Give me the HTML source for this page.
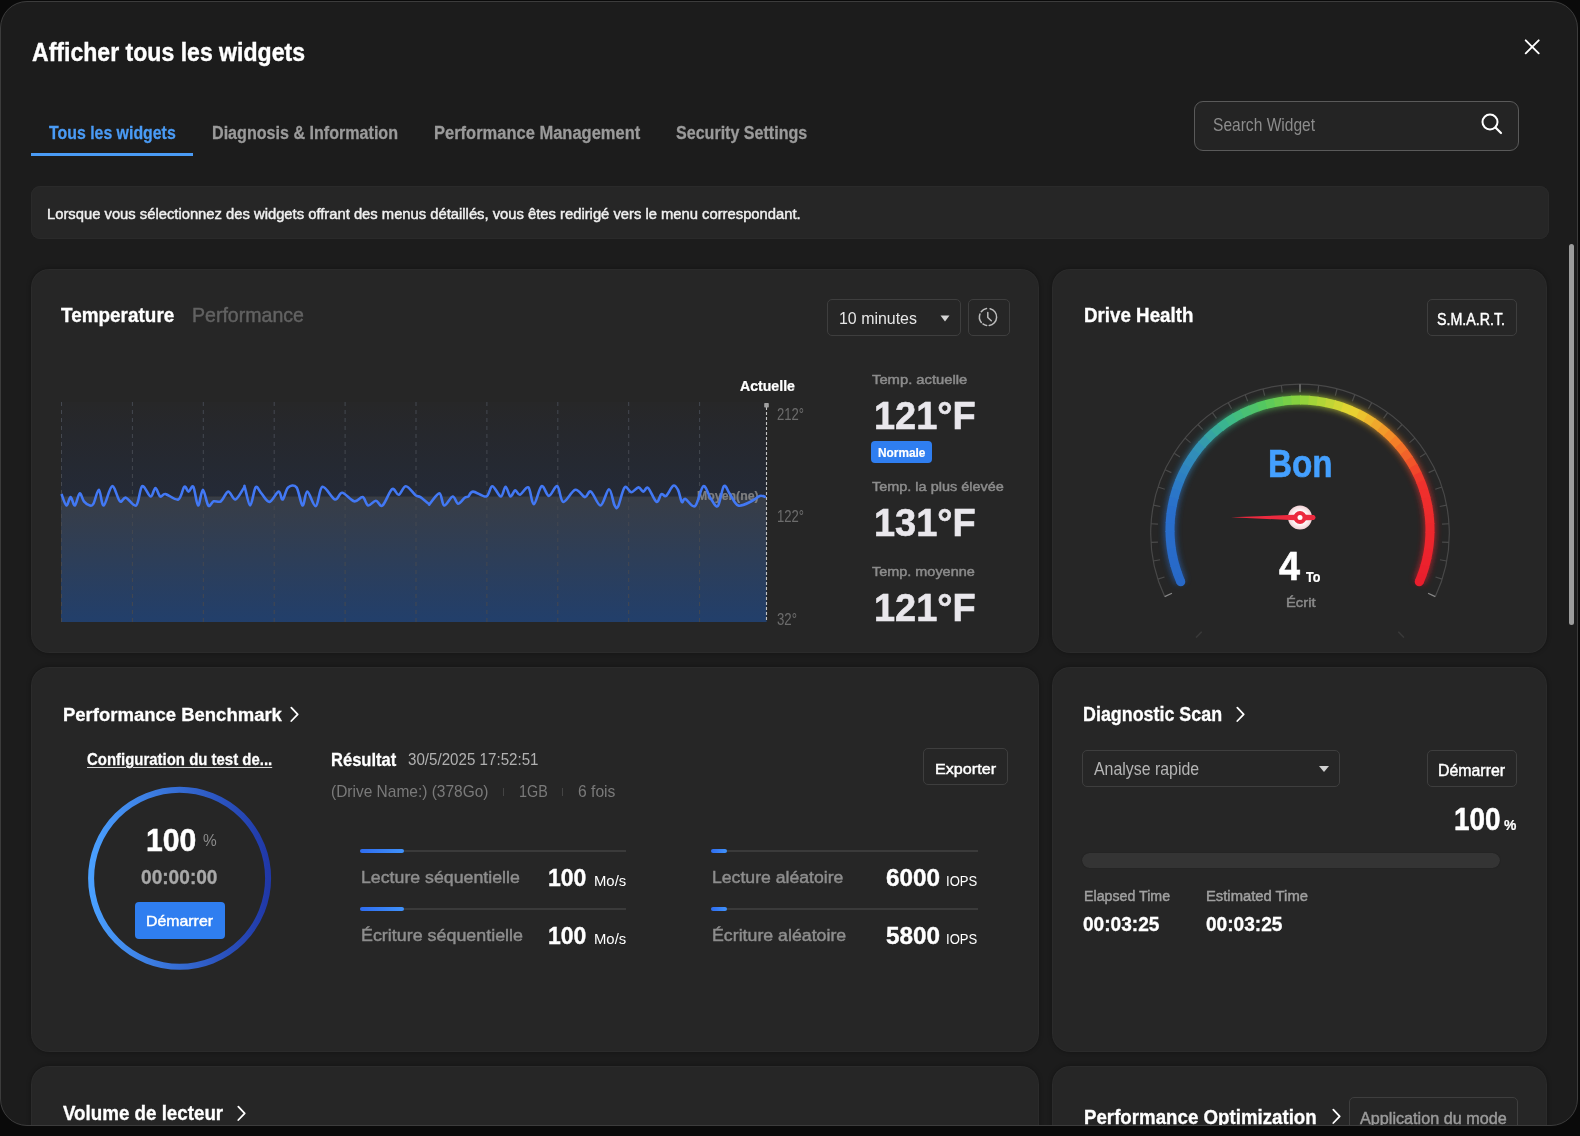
<!DOCTYPE html>
<html><head><meta charset="utf-8"><style>
html,body{margin:0;padding:0;background:#0a0a0a;width:1580px;height:1136px;overflow:hidden;}
#root{position:relative;width:1580px;height:1136px;overflow:hidden;background:#0a0a0a;}
#modal{position:absolute;left:0px;top:1px;width:1578px;height:1125px;box-sizing:border-box;border:1px solid #3c3c3c;border-radius:27px;background:#1c1c1c;overflow:hidden;}
#in{position:absolute;left:-1px;top:-2px;width:1580px;height:1136px;}
.t{position:absolute;white-space:nowrap;transform-origin:0 0;font-family:"Liberation Sans",sans-serif;}
</style></head><body><div id="root"><div id="modal"><div id="in">
<div class="t" style="left:31.59px;top:40.00px;font-size:25.03px;line-height:25.03px;transform:scaleX(0.9220);font-weight:700;color:#ffffff;-webkit-text-stroke:0.39px #ffffff;">Afficher tous les widgets</div>
<svg style="position:absolute;left:1524px;top:39px" width="16" height="16" viewBox="0 0 16 16"><path d="M1.7 1.3L14.7 14.3M14.7 1.3L1.7 14.3" stroke="#fff" stroke-width="1.9" stroke-linecap="round"/></svg>
<div class="t" style="left:49.21px;top:124.00px;font-size:18.00px;line-height:18.00px;transform:scaleX(0.8818);font-weight:700;color:#4a9bf5;-webkit-text-stroke:0.28px #4a9bf5;">Tous les widgets</div>
<div style="position:absolute;left:31.0px;top:153.0px;width:162.0px;height:3.0px;background:#4a9bf5;"></div>
<div class="t" style="left:211.61px;top:124.00px;font-size:18.00px;line-height:18.00px;transform:scaleX(0.8943);font-weight:700;color:#9a9a9a;-webkit-text-stroke:0.28px #9a9a9a;">Diagnosis & Information</div>
<div class="t" style="left:434.11px;top:124.00px;font-size:18.00px;line-height:18.00px;transform:scaleX(0.9163);font-weight:700;color:#9a9a9a;-webkit-text-stroke:0.28px #9a9a9a;">Performance Management</div>
<div class="t" style="left:676.21px;top:124.00px;font-size:18.00px;line-height:18.00px;transform:scaleX(0.8923);font-weight:700;color:#9a9a9a;-webkit-text-stroke:0.28px #9a9a9a;">Security Settings</div>
<div style="position:absolute;left:1194.0px;top:101.0px;width:325.0px;height:50.0px;box-sizing:border-box;border:1px solid #5a5a5a;border-radius:9px;background:#242424;"></div>
<div class="t" style="left:1212.60px;top:117.00px;font-size:17.44px;line-height:17.44px;transform:scaleX(0.8925);color:#8c8c8c;">Search Widget</div>
<svg style="position:absolute;left:1478px;top:110px" width="28" height="28" viewBox="0 0 28 28"><circle cx="12" cy="12" r="7.5" stroke="#fff" stroke-width="2" fill="none"/><path d="M17.5 17.5L23 23" stroke="#fff" stroke-width="2.2" stroke-linecap="round"/></svg>
<div style="position:absolute;left:31.0px;top:186.0px;width:1517.5px;height:53.0px;background:#262626;border-radius:9px;box-shadow:inset 0 0 0 1px #2a2a2a;"></div>
<div class="t" style="left:47.14px;top:207.00px;font-size:14.72px;line-height:14.72px;transform:scaleX(1.0038);color:#f0f0f0;-webkit-text-stroke:0.45px #f0f0f0;">Lorsque vous sélectionnez des widgets offrant des menus détaillés, vous êtes redirigé vers le menu correspondant.</div>
<div style="position:absolute;left:1569.0px;top:244.0px;width:5.0px;height:381.0px;background:#9c9c9c;border-radius:2.5px;"></div>
<div style="position:absolute;left:30.5px;top:269.0px;width:1008.5px;height:384.2px;background:#262626;border-radius:18px;box-shadow:inset 0 0 0 1px rgba(255,255,255,0.022),0 0 4px rgba(0,0,0,0.35);"></div>
<div style="position:absolute;left:1052.0px;top:269.0px;width:495.0px;height:384.2px;background:#262626;border-radius:18px;box-shadow:inset 0 0 0 1px rgba(255,255,255,0.022),0 0 4px rgba(0,0,0,0.35);"></div>
<div style="position:absolute;left:30.5px;top:667.4px;width:1008.5px;height:384.4px;background:#262626;border-radius:18px;box-shadow:inset 0 0 0 1px rgba(255,255,255,0.022),0 0 4px rgba(0,0,0,0.35);"></div>
<div style="position:absolute;left:1052.0px;top:667.4px;width:495.0px;height:384.4px;background:#262626;border-radius:18px;box-shadow:inset 0 0 0 1px rgba(255,255,255,0.022),0 0 4px rgba(0,0,0,0.35);"></div>
<div style="position:absolute;left:30.5px;top:1066.4px;width:1008.5px;height:133.6px;background:#262626;border-radius:18px;box-shadow:inset 0 0 0 1px rgba(255,255,255,0.022),0 0 4px rgba(0,0,0,0.35);"></div>
<div style="position:absolute;left:1052.0px;top:1066.4px;width:495.0px;height:133.6px;background:#262626;border-radius:18px;box-shadow:inset 0 0 0 1px rgba(255,255,255,0.022),0 0 4px rgba(0,0,0,0.35);"></div>
<div class="t" style="left:61.33px;top:306.00px;font-size:19.96px;line-height:19.96px;transform:scaleX(0.9497);font-weight:700;color:#ffffff;-webkit-text-stroke:0.31px #ffffff;">Temperature</div>
<div class="t" style="left:191.74px;top:306.00px;font-size:19.66px;line-height:19.66px;transform:scaleX(0.9945);color:#626262;-webkit-text-stroke:0.45px #626262;">Performance</div>
<div style="position:absolute;left:827.0px;top:299.0px;width:134.0px;height:37.0px;box-sizing:border-box;border:1px solid #3e3e3e;border-radius:5px;"></div>
<div class="t" style="left:839.00px;top:310.00px;font-size:17.15px;line-height:17.15px;transform:scaleX(0.9296);color:#e6e6e6;">10 minutes</div>
<svg style="position:absolute;left:0;top:0" width="1580" height="1136"><path d="M940.5 315.5H949.5L945 321.5Z" fill="#d4d4d4"/></svg>
<div style="position:absolute;left:968.0px;top:299.0px;width:42.0px;height:37.0px;box-sizing:border-box;border:1px solid #3e3e3e;border-radius:5px;"></div>
<svg style="position:absolute;left:0;top:0" width="1580" height="1136"><path d="M990.08 308.66 A8.60 8.60 0 0 1 989.20 325.52 M986.65 325.49 A8.60 8.60 0 0 1 982.95 323.96 M981.32 322.41 A8.60 8.60 0 0 1 979.97 313.92 M981.22 311.71 A8.60 8.60 0 0 1 986.51 308.53" stroke="#bcbcbc" stroke-width="1.5" fill="none" stroke-linecap="round"/><path d="M987.8 312.5V317.5L991.3 320.8" stroke="#bcbcbc" stroke-width="1.5" fill="none" stroke-linecap="round" stroke-linejoin="round"/></svg>
<svg style="position:absolute;left:0;top:0" width="1580" height="1136" viewBox="0 0 1580 1136"><defs><linearGradient id="gtop" x1="0" y1="0" x2="0" y2="1"><stop offset="0" stop-color="#272728"/><stop offset="1" stop-color="#242a37"/></linearGradient><linearGradient id="gbot" x1="0" y1="0" x2="0" y2="1"><stop offset="0" stop-color="#383d46"/><stop offset="1" stop-color="#223f6b"/></linearGradient></defs><rect x="61" y="402" width="705.5" height="94.5" fill="url(#gtop)"/><rect x="61" y="496.5" width="705.5" height="125.5" fill="url(#gbot)"/><line x1="61.5" y1="402" x2="61.5" y2="622" stroke="#444850" stroke-width="1" stroke-dasharray="4 4"/><line x1="132.4" y1="402" x2="132.4" y2="622" stroke="#444850" stroke-width="1" stroke-dasharray="4 4"/><line x1="203.3" y1="402" x2="203.3" y2="622" stroke="#444850" stroke-width="1" stroke-dasharray="4 4"/><line x1="274.2" y1="402" x2="274.2" y2="622" stroke="#444850" stroke-width="1" stroke-dasharray="4 4"/><line x1="345.1" y1="402" x2="345.1" y2="622" stroke="#444850" stroke-width="1" stroke-dasharray="4 4"/><line x1="416.0" y1="402" x2="416.0" y2="622" stroke="#444850" stroke-width="1" stroke-dasharray="4 4"/><line x1="486.9" y1="402" x2="486.9" y2="622" stroke="#444850" stroke-width="1" stroke-dasharray="4 4"/><line x1="557.8" y1="402" x2="557.8" y2="622" stroke="#444850" stroke-width="1" stroke-dasharray="4 4"/><line x1="628.7" y1="402" x2="628.7" y2="622" stroke="#444850" stroke-width="1" stroke-dasharray="4 4"/><line x1="699.6" y1="402" x2="699.6" y2="622" stroke="#444850" stroke-width="1" stroke-dasharray="4 4"/></svg>
<div class="t" style="left:697.15px;top:490.00px;font-size:12.65px;line-height:12.65px;transform:scaleX(0.9753);font-weight:700;color:#8d8d8d;opacity:0.85;-webkit-text-stroke:0.20px #8d8d8d;">Moyen(ne)</div>
<svg style="position:absolute;left:0;top:0" width="1580" height="1136"><line x1="766.5" y1="407" x2="766.5" y2="622" stroke="#c4c4c4" stroke-width="1.1" stroke-dasharray="3 2"/><rect x="764.2" y="403" width="4.6" height="4.6" rx="0.8" fill="#a0a0a0"/><path d="M61.5 494.1 C62.3 496.0 64.9 505.0 66.4 505.5 C67.9 506.0 69.2 497.1 70.6 497.1 C72.0 497.1 73.3 506.1 74.8 505.5 C76.3 504.9 78.1 494.2 79.7 493.4 C81.2 492.7 82.2 499.3 83.9 501.3 C85.6 503.3 88.3 505.1 89.9 505.5 C91.5 505.9 92.0 506.3 93.5 503.7 C95.0 501.1 97.2 489.5 98.9 489.8 C100.6 490.1 101.5 506.1 103.7 505.5 C105.9 504.9 109.4 486.9 112.1 486.2 C114.8 485.5 117.6 499.4 119.9 501.3 C122.2 503.2 123.2 497.0 125.9 497.7 C128.7 498.4 133.5 507.4 136.2 505.5 C138.9 503.6 139.8 487.7 142.2 486.2 C144.6 484.7 148.4 496.2 150.6 496.5 C152.8 496.8 153.8 488.0 155.4 488.0 C157.0 488.0 158.5 495.5 160.2 496.5 C161.9 497.5 162.6 493.5 165.6 494.1 C168.6 494.6 175.1 500.7 178.3 499.5 C181.4 498.3 182.6 488.1 184.3 486.8 C186.0 485.5 187.0 491.6 188.5 491.6 C190.0 491.6 191.7 484.5 193.3 486.8 C194.9 489.1 196.5 505.0 198.1 505.5 C199.7 506.0 201.2 489.8 202.9 489.8 C204.6 489.8 206.5 503.6 208.3 505.5 C210.1 507.4 211.6 502.0 213.7 501.3 C215.8 500.6 218.5 502.9 220.9 501.3 C223.4 499.7 225.8 491.9 228.2 491.6 C230.6 491.3 232.8 500.1 235.4 499.5 C238.0 498.9 242.2 490.0 243.8 488.0 C245.4 486.0 243.7 484.5 244.8 487.4 C245.9 490.3 248.4 505.5 250.2 505.5 C252.0 505.5 253.8 489.5 255.6 487.4 C257.4 485.3 258.7 490.4 261.0 492.8 C263.3 495.3 266.6 502.1 269.5 501.9 C272.4 501.7 276.3 492.0 278.5 491.6 C280.7 491.2 281.1 500.2 282.7 499.5 C284.3 498.8 285.8 489.4 288.1 487.4 C290.4 485.4 294.1 484.4 296.5 487.4 C298.9 490.4 300.7 504.8 302.5 505.5 C304.3 506.2 305.1 491.5 307.3 491.6 C309.5 491.7 313.3 506.9 315.8 506.1 C318.3 505.3 319.2 487.9 322.4 486.8 C325.6 485.7 331.7 498.5 335.0 499.5 C338.3 500.5 339.0 492.5 342.2 492.8 C345.4 493.1 350.8 500.6 354.2 501.3 C357.6 502.0 360.4 496.4 362.7 497.1 C365.0 497.8 365.9 504.9 368.1 505.5 C370.3 506.1 373.5 500.7 375.9 500.7 C378.3 500.7 379.8 507.4 382.5 505.5 C385.2 503.6 389.4 491.0 392.1 489.2 C394.8 487.4 396.4 495.2 398.7 494.7 C401.0 494.2 403.1 486.1 405.9 486.2 C408.8 486.3 413.2 493.4 415.6 495.3 C418.0 497.1 418.2 495.7 420.4 497.1 C422.6 498.5 427.2 502.6 428.8 503.7 C430.4 504.8 428.0 505.4 429.8 503.7 C431.6 502.0 437.0 493.1 439.4 493.4 C441.8 493.7 442.0 505.0 444.2 505.5 C446.4 506.0 450.4 496.8 452.7 496.5 C455.0 496.2 456.1 503.5 458.1 503.7 C460.1 503.9 463.0 498.9 464.7 497.7 C466.4 496.5 466.9 497.5 468.3 496.5 C469.7 495.5 470.1 491.6 473.1 491.6 C476.1 491.6 483.1 497.4 486.3 496.5 C489.5 495.6 489.9 486.2 492.3 486.2 C494.7 486.2 498.6 496.4 500.8 496.5 C503.0 496.6 504.0 486.8 505.6 486.8 C507.2 486.8 508.8 495.9 510.4 496.5 C512.0 497.1 513.6 490.7 515.2 490.4 C516.8 490.1 517.8 495.2 520.0 494.7 C522.2 494.2 526.1 485.8 528.4 487.4 C530.7 489.0 531.6 504.5 533.8 504.3 C536.0 504.1 539.1 487.6 541.6 486.2 C544.1 484.8 546.3 495.9 548.9 495.9 C551.5 495.9 554.9 485.2 557.3 486.2 C559.7 487.2 560.3 501.3 563.3 501.9 C566.3 502.5 571.7 490.6 575.3 489.8 C578.9 489.0 582.3 496.8 584.9 497.1 C587.5 497.4 588.3 490.2 590.9 491.6 C593.6 493.0 597.6 505.9 600.6 505.5 C603.6 505.1 606.7 489.3 609.0 489.2 C611.3 489.1 612.9 502.0 614.4 504.9 C615.9 507.8 616.3 509.6 618.0 506.7 C619.7 503.8 622.4 489.8 624.7 487.4 C626.9 485.0 629.0 492.2 631.3 492.2 C633.6 492.2 636.5 487.5 638.5 487.4 C640.5 487.3 641.7 491.5 643.3 491.6 C644.9 491.7 645.9 486.3 648.1 488.0 C650.3 489.7 654.3 500.9 656.5 501.9 C658.7 502.9 659.7 495.1 661.3 494.1 C662.9 493.0 664.1 497.3 666.1 495.9 C668.1 494.5 671.3 486.5 673.4 485.6 C675.4 484.7 676.8 487.7 678.2 490.4 C679.6 493.1 680.6 500.5 681.8 501.9 C683.0 503.3 683.2 498.2 685.4 498.9 C687.6 499.6 692.0 508.2 695.0 506.1 C698.0 504.0 700.8 487.5 703.4 486.2 C706.0 484.9 708.2 495.0 710.6 498.3 C713.0 501.6 715.6 508.1 717.8 506.1 C720.0 504.1 721.9 488.2 723.9 486.2 C725.9 484.2 727.5 490.8 729.9 494.1 C732.3 497.3 734.7 504.3 738.3 505.5 C741.9 506.7 747.9 502.9 751.5 501.3 C755.1 499.7 757.5 496.6 759.9 495.9 C762.3 495.2 764.9 496.9 765.9 497.1" stroke="#4278f4" stroke-width="2.6" fill="none" stroke-linejoin="round"/></svg>
<div class="t" style="left:740.18px;top:378.00px;font-size:15.32px;line-height:15.32px;transform:scaleX(0.9217);font-weight:700;color:#ffffff;-webkit-text-stroke:0.24px #ffffff;">Actuelle</div>
<div class="t" style="left:777.00px;top:407.00px;font-size:15.70px;line-height:15.70px;transform:scaleX(0.8348);color:#6c6c6c;">212°</div>
<div class="t" style="left:777.00px;top:509.00px;font-size:15.70px;line-height:15.70px;transform:scaleX(0.8348);color:#6c6c6c;">122°</div>
<div class="t" style="left:777.00px;top:612.00px;font-size:15.70px;line-height:15.70px;transform:scaleX(0.8426);color:#6c6c6c;">32°</div>
<div class="t" style="left:871.94px;top:374.00px;font-size:12.39px;line-height:12.39px;transform:scaleX(1.1943);color:#8c8c8c;-webkit-text-stroke:0.45px #8c8c8c;">Temp. actuelle</div>
<div class="t" style="left:873.85px;top:396.00px;font-size:39.39px;line-height:39.39px;transform:scaleX(0.9638);font-weight:700;color:#e9e7ec;-webkit-text-stroke:0.60px #e9e7ec;">121°F</div>
<div style="position:absolute;left:870.8px;top:441.0px;width:61.2px;height:22.0px;background:#2f7ef0;border-radius:4px;"></div>
<div class="t" style="left:878.14px;top:447.00px;font-size:12.37px;line-height:12.37px;transform:scaleX(0.9578);font-weight:700;color:#ffffff;-webkit-text-stroke:0.19px #ffffff;">Normale</div>
<div class="t" style="left:871.94px;top:481.00px;font-size:12.83px;line-height:12.83px;transform:scaleX(1.1265);color:#8c8c8c;-webkit-text-stroke:0.45px #8c8c8c;">Temp. la plus élevée</div>
<div class="t" style="left:873.85px;top:503.00px;font-size:39.68px;line-height:39.68px;transform:scaleX(0.9567);font-weight:700;color:#e9e7ec;-webkit-text-stroke:0.60px #e9e7ec;">131°F</div>
<div class="t" style="left:871.94px;top:566.00px;font-size:12.83px;line-height:12.83px;transform:scaleX(1.1256);color:#8c8c8c;-webkit-text-stroke:0.45px #8c8c8c;">Temp. moyenne</div>
<div class="t" style="left:873.85px;top:588.00px;font-size:39.53px;line-height:39.53px;transform:scaleX(0.9602);font-weight:700;color:#e9e7ec;-webkit-text-stroke:0.60px #e9e7ec;">121°F</div>
<div class="t" style="left:1083.83px;top:306.00px;font-size:19.96px;line-height:19.96px;transform:scaleX(0.9403);font-weight:700;color:#ffffff;-webkit-text-stroke:0.31px #ffffff;">Drive Health</div>
<div style="position:absolute;left:1426.5px;top:299.0px;width:90.5px;height:37.0px;box-sizing:border-box;border:1px solid #3e3e3e;border-radius:5px;"></div>
<div class="t" style="left:1437.44px;top:311.00px;font-size:16.46px;line-height:16.46px;transform:scaleX(0.8662);color:#ffffff;-webkit-text-stroke:0.45px #ffffff;">S.M.A.R.T.</div>
<svg style="position:absolute;left:0;top:0" width="1580" height="1136" viewBox="0 0 1580 1136"><defs><filter id="glow" x="-20%" y="-20%" width="140%" height="140%"><feGaussianBlur stdDeviation="3.5"/></filter><radialGradient id="pin" cx="0.5" cy="0.5" r="0.5"><stop offset="0.5" stop-color="#ffffff"/><stop offset="1" stop-color="#f2d0d4"/></radialGradient></defs><path d="M1164.69 596.60 A149.3 149.3 0 1 1 1435.31 596.60" stroke="#484848" stroke-width="1.2" fill="none"/><line x1="1164.69" y1="596.60" x2="1171.94" y2="593.22" stroke="#8a8a8a" stroke-width="1.2"/><line x1="1157.86" y1="579.17" x2="1164.52" y2="577.03" stroke="#4a4a4a" stroke-width="1.2"/><line x1="1153.26" y1="561.03" x2="1160.14" y2="559.74" stroke="#4a4a4a" stroke-width="1.2"/><line x1="1150.97" y1="542.45" x2="1157.96" y2="542.03" stroke="#4a4a4a" stroke-width="1.2"/><line x1="1151.02" y1="523.74" x2="1158.00" y2="524.19" stroke="#4a4a4a" stroke-width="1.2"/><line x1="1153.41" y1="505.17" x2="1160.28" y2="506.50" stroke="#4a4a4a" stroke-width="1.2"/><line x1="1158.11" y1="487.05" x2="1164.76" y2="489.23" stroke="#4a4a4a" stroke-width="1.2"/><line x1="1165.03" y1="469.67" x2="1171.36" y2="472.66" stroke="#4a4a4a" stroke-width="1.2"/><line x1="1174.08" y1="453.28" x2="1179.99" y2="457.04" stroke="#4a4a4a" stroke-width="1.2"/><line x1="1185.11" y1="438.16" x2="1190.49" y2="442.63" stroke="#4a4a4a" stroke-width="1.2"/><line x1="1197.94" y1="424.53" x2="1202.72" y2="429.64" stroke="#4a4a4a" stroke-width="1.2"/><line x1="1212.38" y1="412.62" x2="1216.48" y2="418.29" stroke="#4a4a4a" stroke-width="1.2"/><line x1="1228.19" y1="402.60" x2="1231.56" y2="408.74" stroke="#4a4a4a" stroke-width="1.2"/><line x1="1245.13" y1="394.65" x2="1247.70" y2="401.16" stroke="#4a4a4a" stroke-width="1.2"/><line x1="1262.93" y1="388.87" x2="1264.67" y2="395.66" stroke="#4a4a4a" stroke-width="1.2"/><line x1="1281.32" y1="385.37" x2="1282.20" y2="392.32" stroke="#4a4a4a" stroke-width="1.2"/><line x1="1300.00" y1="384.20" x2="1300.00" y2="392.20" stroke="#8a8a8a" stroke-width="1.2"/><line x1="1318.68" y1="385.37" x2="1317.80" y2="392.32" stroke="#4a4a4a" stroke-width="1.2"/><line x1="1337.07" y1="388.87" x2="1335.33" y2="395.66" stroke="#4a4a4a" stroke-width="1.2"/><line x1="1354.87" y1="394.65" x2="1352.30" y2="401.16" stroke="#4a4a4a" stroke-width="1.2"/><line x1="1371.81" y1="402.60" x2="1368.44" y2="408.74" stroke="#4a4a4a" stroke-width="1.2"/><line x1="1387.62" y1="412.62" x2="1383.52" y2="418.29" stroke="#4a4a4a" stroke-width="1.2"/><line x1="1402.06" y1="424.53" x2="1397.28" y2="429.64" stroke="#4a4a4a" stroke-width="1.2"/><line x1="1414.89" y1="438.16" x2="1409.51" y2="442.63" stroke="#4a4a4a" stroke-width="1.2"/><line x1="1425.92" y1="453.28" x2="1420.01" y2="457.04" stroke="#4a4a4a" stroke-width="1.2"/><line x1="1434.97" y1="469.67" x2="1428.64" y2="472.66" stroke="#4a4a4a" stroke-width="1.2"/><line x1="1441.89" y1="487.05" x2="1435.24" y2="489.23" stroke="#4a4a4a" stroke-width="1.2"/><line x1="1446.59" y1="505.17" x2="1439.72" y2="506.50" stroke="#4a4a4a" stroke-width="1.2"/><line x1="1448.98" y1="523.74" x2="1442.00" y2="524.19" stroke="#4a4a4a" stroke-width="1.2"/><line x1="1449.03" y1="542.45" x2="1442.04" y2="542.03" stroke="#4a4a4a" stroke-width="1.2"/><line x1="1446.74" y1="561.03" x2="1439.86" y2="559.74" stroke="#4a4a4a" stroke-width="1.2"/><line x1="1442.14" y1="579.17" x2="1435.48" y2="577.03" stroke="#4a4a4a" stroke-width="1.2"/><line x1="1435.31" y1="596.60" x2="1428.06" y2="593.22" stroke="#8a8a8a" stroke-width="1.2"/><line x1="1196.06" y1="637.44" x2="1201.71" y2="631.79" stroke="#3a3a3a" stroke-width="1.5"/><line x1="1403.94" y1="637.44" x2="1398.29" y2="631.79" stroke="#3a3a3a" stroke-width="1.5"/><g filter="url(#glow)" opacity="0.85"><path d="M1180.78 581.84 A130 130 0 0 1 1177.32 573.00" stroke="rgb(40,105,200)" stroke-width="9" fill="none"/><path d="M1177.62 573.86 A130 130 0 0 1 1174.75 564.81" stroke="rgb(40,106,200)" stroke-width="9" fill="none"/><path d="M1174.99 565.69 A130 130 0 0 1 1172.72 556.47" stroke="rgb(40,106,201)" stroke-width="9" fill="none"/><path d="M1172.91 557.36 A130 130 0 0 1 1171.25 548.02" stroke="rgb(40,107,201)" stroke-width="9" fill="none"/><path d="M1171.38 548.92 A130 130 0 0 1 1170.35 539.48" stroke="rgb(41,108,202)" stroke-width="9" fill="none"/><path d="M1170.42 540.39 A130 130 0 0 1 1170.00 530.91" stroke="rgb(41,109,203)" stroke-width="9" fill="none"/><path d="M1170.01 531.82 A130 130 0 0 1 1170.23 522.33" stroke="rgb(41,110,203)" stroke-width="9" fill="none"/><path d="M1170.18 523.23 A130 130 0 0 1 1171.02 513.78" stroke="rgb(41,110,204)" stroke-width="9" fill="none"/><path d="M1170.91 514.68 A130 130 0 0 1 1172.37 505.31" stroke="rgb(41,111,204)" stroke-width="9" fill="none"/><path d="M1172.20 506.20 A130 130 0 0 1 1174.27 496.94" stroke="rgb(42,114,203)" stroke-width="9" fill="none"/><path d="M1174.05 497.82 A130 130 0 0 1 1176.73 488.71" stroke="rgb(43,118,200)" stroke-width="9" fill="none"/><path d="M1176.44 489.58 A130 130 0 0 1 1179.72 480.67" stroke="rgb(44,123,198)" stroke-width="9" fill="none"/><path d="M1179.38 481.51 A130 130 0 0 1 1183.24 472.84" stroke="rgb(45,128,195)" stroke-width="9" fill="none"/><path d="M1182.84 473.66 A130 130 0 0 1 1187.27 465.26" stroke="rgb(47,132,192)" stroke-width="9" fill="none"/><path d="M1186.82 466.05 A130 130 0 0 1 1191.78 457.96" stroke="rgb(48,137,189)" stroke-width="9" fill="none"/><path d="M1191.28 458.72 A130 130 0 0 1 1196.77 450.98" stroke="rgb(49,141,186)" stroke-width="9" fill="none"/><path d="M1196.22 451.70 A130 130 0 0 1 1202.21 444.34" stroke="rgb(50,147,182)" stroke-width="9" fill="none"/><path d="M1201.62 445.03 A130 130 0 0 1 1208.08 438.08" stroke="rgb(52,155,172)" stroke-width="9" fill="none"/><path d="M1207.44 438.72 A130 130 0 0 1 1214.34 432.21" stroke="rgb(54,164,163)" stroke-width="9" fill="none"/><path d="M1213.66 432.81 A130 130 0 0 1 1220.98 426.77" stroke="rgb(56,172,154)" stroke-width="9" fill="none"/><path d="M1220.26 427.33 A130 130 0 0 1 1227.96 421.78" stroke="rgb(58,180,144)" stroke-width="9" fill="none"/><path d="M1227.21 422.29 A130 130 0 0 1 1235.26 417.27" stroke="rgb(62,186,135)" stroke-width="9" fill="none"/><path d="M1234.48 417.72 A130 130 0 0 1 1242.84 413.24" stroke="rgb(67,189,125)" stroke-width="9" fill="none"/><path d="M1242.03 413.64 A130 130 0 0 1 1250.67 409.72" stroke="rgb(73,192,116)" stroke-width="9" fill="none"/><path d="M1249.83 410.07 A130 130 0 0 1 1258.71 406.73" stroke="rgb(78,195,107)" stroke-width="9" fill="none"/><path d="M1257.85 407.02 A130 130 0 0 1 1266.94 404.27" stroke="rgb(83,199,97)" stroke-width="9" fill="none"/><path d="M1266.06 404.51 A130 130 0 0 1 1275.31 402.37" stroke="rgb(94,202,89)" stroke-width="9" fill="none"/><path d="M1274.42 402.54 A130 130 0 0 1 1283.78 401.02" stroke="rgb(107,204,80)" stroke-width="9" fill="none"/><path d="M1282.88 401.13 A130 130 0 0 1 1292.33 400.23" stroke="rgb(120,207,72)" stroke-width="9" fill="none"/><path d="M1291.42 400.28 A130 130 0 0 1 1300.91 400.00" stroke="rgb(133,210,64)" stroke-width="9" fill="none"/><path d="M1300.00 400.00 A130 130 0 0 1 1309.48 400.35" stroke="rgb(147,212,59)" stroke-width="9" fill="none"/><path d="M1308.58 400.28 A130 130 0 0 1 1318.02 401.25" stroke="rgb(163,212,57)" stroke-width="9" fill="none"/><path d="M1317.12 401.13 A130 130 0 0 1 1326.47 402.72" stroke="rgb(178,213,55)" stroke-width="9" fill="none"/><path d="M1325.58 402.54 A130 130 0 0 1 1334.81 404.75" stroke="rgb(193,213,54)" stroke-width="9" fill="none"/><path d="M1333.94 404.51 A130 130 0 0 1 1343.00 407.32" stroke="rgb(208,214,52)" stroke-width="9" fill="none"/><path d="M1342.15 407.02 A130 130 0 0 1 1351.00 410.42" stroke="rgb(224,214,50)" stroke-width="9" fill="none"/><path d="M1350.17 410.07 A130 130 0 0 1 1358.78 414.05" stroke="rgb(233,208,49)" stroke-width="9" fill="none"/><path d="M1357.97 413.64 A130 130 0 0 1 1366.31 418.18" stroke="rgb(235,194,47)" stroke-width="9" fill="none"/><path d="M1365.52 417.72 A130 130 0 0 1 1373.54 422.80" stroke="rgb(237,181,45)" stroke-width="9" fill="none"/><path d="M1372.79 422.29 A130 130 0 0 1 1380.45 427.89" stroke="rgb(239,168,44)" stroke-width="9" fill="none"/><path d="M1379.74 427.33 A130 130 0 0 1 1387.02 433.42" stroke="rgb(241,154,42)" stroke-width="9" fill="none"/><path d="M1386.34 432.81 A130 130 0 0 1 1393.20 439.37" stroke="rgb(243,141,40)" stroke-width="9" fill="none"/><path d="M1392.56 438.72 A130 130 0 0 1 1398.98 445.72" stroke="rgb(244,127,40)" stroke-width="9" fill="none"/><path d="M1398.38 445.03 A130 130 0 0 1 1404.32 452.43" stroke="rgb(243,113,41)" stroke-width="9" fill="none"/><path d="M1403.78 451.70 A130 130 0 0 1 1409.21 459.48" stroke="rgb(242,99,42)" stroke-width="9" fill="none"/><path d="M1408.72 458.72 A130 130 0 0 1 1413.63 466.84" stroke="rgb(242,85,42)" stroke-width="9" fill="none"/><path d="M1413.18 466.05 A130 130 0 0 1 1417.55 474.48" stroke="rgb(241,71,43)" stroke-width="9" fill="none"/><path d="M1417.16 473.66 A130 130 0 0 1 1420.95 482.35" stroke="rgb(240,57,44)" stroke-width="9" fill="none"/><path d="M1420.62 481.51 A130 130 0 0 1 1423.83 490.44" stroke="rgb(239,49,45)" stroke-width="9" fill="none"/><path d="M1423.56 489.58 A130 130 0 0 1 1426.17 498.70" stroke="rgb(239,47,45)" stroke-width="9" fill="none"/><path d="M1425.95 497.82 A130 130 0 0 1 1427.97 507.09" stroke="rgb(238,45,45)" stroke-width="9" fill="none"/><path d="M1427.80 506.20 A130 130 0 0 1 1429.20 515.58" stroke="rgb(238,44,45)" stroke-width="9" fill="none"/><path d="M1429.09 514.68 A130 130 0 0 1 1429.87 524.14" stroke="rgb(238,42,45)" stroke-width="9" fill="none"/><path d="M1429.82 523.23 A130 130 0 0 1 1429.97 532.72" stroke="rgb(237,40,45)" stroke-width="9" fill="none"/><path d="M1429.99 531.82 A130 130 0 0 1 1429.51 541.29" stroke="rgb(237,39,45)" stroke-width="9" fill="none"/><path d="M1429.58 540.39 A130 130 0 0 1 1428.48 549.81" stroke="rgb(236,37,45)" stroke-width="9" fill="none"/><path d="M1428.62 548.92 A130 130 0 0 1 1426.89 558.25" stroke="rgb(236,35,45)" stroke-width="9" fill="none"/><path d="M1427.09 557.36 A130 130 0 0 1 1424.75 566.56" stroke="rgb(236,34,45)" stroke-width="9" fill="none"/><path d="M1425.01 565.69 A130 130 0 0 1 1422.07 574.71" stroke="rgb(235,32,45)" stroke-width="9" fill="none"/><path d="M1422.38 573.86 A130 130 0 0 1 1419.22 581.84" stroke="rgb(235,30,45)" stroke-width="9" fill="none"/></g><g><path d="M1180.78 581.84 A130 130 0 0 1 1177.32 573.00" stroke="rgb(40,105,200)" stroke-width="9" fill="none"/><path d="M1177.62 573.86 A130 130 0 0 1 1174.75 564.81" stroke="rgb(40,106,200)" stroke-width="9" fill="none"/><path d="M1174.99 565.69 A130 130 0 0 1 1172.72 556.47" stroke="rgb(40,106,201)" stroke-width="9" fill="none"/><path d="M1172.91 557.36 A130 130 0 0 1 1171.25 548.02" stroke="rgb(40,107,201)" stroke-width="9" fill="none"/><path d="M1171.38 548.92 A130 130 0 0 1 1170.35 539.48" stroke="rgb(41,108,202)" stroke-width="9" fill="none"/><path d="M1170.42 540.39 A130 130 0 0 1 1170.00 530.91" stroke="rgb(41,109,203)" stroke-width="9" fill="none"/><path d="M1170.01 531.82 A130 130 0 0 1 1170.23 522.33" stroke="rgb(41,110,203)" stroke-width="9" fill="none"/><path d="M1170.18 523.23 A130 130 0 0 1 1171.02 513.78" stroke="rgb(41,110,204)" stroke-width="9" fill="none"/><path d="M1170.91 514.68 A130 130 0 0 1 1172.37 505.31" stroke="rgb(41,111,204)" stroke-width="9" fill="none"/><path d="M1172.20 506.20 A130 130 0 0 1 1174.27 496.94" stroke="rgb(42,114,203)" stroke-width="9" fill="none"/><path d="M1174.05 497.82 A130 130 0 0 1 1176.73 488.71" stroke="rgb(43,118,200)" stroke-width="9" fill="none"/><path d="M1176.44 489.58 A130 130 0 0 1 1179.72 480.67" stroke="rgb(44,123,198)" stroke-width="9" fill="none"/><path d="M1179.38 481.51 A130 130 0 0 1 1183.24 472.84" stroke="rgb(45,128,195)" stroke-width="9" fill="none"/><path d="M1182.84 473.66 A130 130 0 0 1 1187.27 465.26" stroke="rgb(47,132,192)" stroke-width="9" fill="none"/><path d="M1186.82 466.05 A130 130 0 0 1 1191.78 457.96" stroke="rgb(48,137,189)" stroke-width="9" fill="none"/><path d="M1191.28 458.72 A130 130 0 0 1 1196.77 450.98" stroke="rgb(49,141,186)" stroke-width="9" fill="none"/><path d="M1196.22 451.70 A130 130 0 0 1 1202.21 444.34" stroke="rgb(50,147,182)" stroke-width="9" fill="none"/><path d="M1201.62 445.03 A130 130 0 0 1 1208.08 438.08" stroke="rgb(52,155,172)" stroke-width="9" fill="none"/><path d="M1207.44 438.72 A130 130 0 0 1 1214.34 432.21" stroke="rgb(54,164,163)" stroke-width="9" fill="none"/><path d="M1213.66 432.81 A130 130 0 0 1 1220.98 426.77" stroke="rgb(56,172,154)" stroke-width="9" fill="none"/><path d="M1220.26 427.33 A130 130 0 0 1 1227.96 421.78" stroke="rgb(58,180,144)" stroke-width="9" fill="none"/><path d="M1227.21 422.29 A130 130 0 0 1 1235.26 417.27" stroke="rgb(62,186,135)" stroke-width="9" fill="none"/><path d="M1234.48 417.72 A130 130 0 0 1 1242.84 413.24" stroke="rgb(67,189,125)" stroke-width="9" fill="none"/><path d="M1242.03 413.64 A130 130 0 0 1 1250.67 409.72" stroke="rgb(73,192,116)" stroke-width="9" fill="none"/><path d="M1249.83 410.07 A130 130 0 0 1 1258.71 406.73" stroke="rgb(78,195,107)" stroke-width="9" fill="none"/><path d="M1257.85 407.02 A130 130 0 0 1 1266.94 404.27" stroke="rgb(83,199,97)" stroke-width="9" fill="none"/><path d="M1266.06 404.51 A130 130 0 0 1 1275.31 402.37" stroke="rgb(94,202,89)" stroke-width="9" fill="none"/><path d="M1274.42 402.54 A130 130 0 0 1 1283.78 401.02" stroke="rgb(107,204,80)" stroke-width="9" fill="none"/><path d="M1282.88 401.13 A130 130 0 0 1 1292.33 400.23" stroke="rgb(120,207,72)" stroke-width="9" fill="none"/><path d="M1291.42 400.28 A130 130 0 0 1 1300.91 400.00" stroke="rgb(133,210,64)" stroke-width="9" fill="none"/><path d="M1300.00 400.00 A130 130 0 0 1 1309.48 400.35" stroke="rgb(147,212,59)" stroke-width="9" fill="none"/><path d="M1308.58 400.28 A130 130 0 0 1 1318.02 401.25" stroke="rgb(163,212,57)" stroke-width="9" fill="none"/><path d="M1317.12 401.13 A130 130 0 0 1 1326.47 402.72" stroke="rgb(178,213,55)" stroke-width="9" fill="none"/><path d="M1325.58 402.54 A130 130 0 0 1 1334.81 404.75" stroke="rgb(193,213,54)" stroke-width="9" fill="none"/><path d="M1333.94 404.51 A130 130 0 0 1 1343.00 407.32" stroke="rgb(208,214,52)" stroke-width="9" fill="none"/><path d="M1342.15 407.02 A130 130 0 0 1 1351.00 410.42" stroke="rgb(224,214,50)" stroke-width="9" fill="none"/><path d="M1350.17 410.07 A130 130 0 0 1 1358.78 414.05" stroke="rgb(233,208,49)" stroke-width="9" fill="none"/><path d="M1357.97 413.64 A130 130 0 0 1 1366.31 418.18" stroke="rgb(235,194,47)" stroke-width="9" fill="none"/><path d="M1365.52 417.72 A130 130 0 0 1 1373.54 422.80" stroke="rgb(237,181,45)" stroke-width="9" fill="none"/><path d="M1372.79 422.29 A130 130 0 0 1 1380.45 427.89" stroke="rgb(239,168,44)" stroke-width="9" fill="none"/><path d="M1379.74 427.33 A130 130 0 0 1 1387.02 433.42" stroke="rgb(241,154,42)" stroke-width="9" fill="none"/><path d="M1386.34 432.81 A130 130 0 0 1 1393.20 439.37" stroke="rgb(243,141,40)" stroke-width="9" fill="none"/><path d="M1392.56 438.72 A130 130 0 0 1 1398.98 445.72" stroke="rgb(244,127,40)" stroke-width="9" fill="none"/><path d="M1398.38 445.03 A130 130 0 0 1 1404.32 452.43" stroke="rgb(243,113,41)" stroke-width="9" fill="none"/><path d="M1403.78 451.70 A130 130 0 0 1 1409.21 459.48" stroke="rgb(242,99,42)" stroke-width="9" fill="none"/><path d="M1408.72 458.72 A130 130 0 0 1 1413.63 466.84" stroke="rgb(242,85,42)" stroke-width="9" fill="none"/><path d="M1413.18 466.05 A130 130 0 0 1 1417.55 474.48" stroke="rgb(241,71,43)" stroke-width="9" fill="none"/><path d="M1417.16 473.66 A130 130 0 0 1 1420.95 482.35" stroke="rgb(240,57,44)" stroke-width="9" fill="none"/><path d="M1420.62 481.51 A130 130 0 0 1 1423.83 490.44" stroke="rgb(239,49,45)" stroke-width="9" fill="none"/><path d="M1423.56 489.58 A130 130 0 0 1 1426.17 498.70" stroke="rgb(239,47,45)" stroke-width="9" fill="none"/><path d="M1425.95 497.82 A130 130 0 0 1 1427.97 507.09" stroke="rgb(238,45,45)" stroke-width="9" fill="none"/><path d="M1427.80 506.20 A130 130 0 0 1 1429.20 515.58" stroke="rgb(238,44,45)" stroke-width="9" fill="none"/><path d="M1429.09 514.68 A130 130 0 0 1 1429.87 524.14" stroke="rgb(238,42,45)" stroke-width="9" fill="none"/><path d="M1429.82 523.23 A130 130 0 0 1 1429.97 532.72" stroke="rgb(237,40,45)" stroke-width="9" fill="none"/><path d="M1429.99 531.82 A130 130 0 0 1 1429.51 541.29" stroke="rgb(237,39,45)" stroke-width="9" fill="none"/><path d="M1429.58 540.39 A130 130 0 0 1 1428.48 549.81" stroke="rgb(236,37,45)" stroke-width="9" fill="none"/><path d="M1428.62 548.92 A130 130 0 0 1 1426.89 558.25" stroke="rgb(236,35,45)" stroke-width="9" fill="none"/><path d="M1427.09 557.36 A130 130 0 0 1 1424.75 566.56" stroke="rgb(236,34,45)" stroke-width="9" fill="none"/><path d="M1425.01 565.69 A130 130 0 0 1 1422.07 574.71" stroke="rgb(235,32,45)" stroke-width="9" fill="none"/><path d="M1422.38 573.86 A130 130 0 0 1 1419.22 581.84" stroke="rgb(235,30,45)" stroke-width="9" fill="none"/></g><circle cx="1180.78" cy="581.84" r="4.5" fill="rgb(40,105,200)"/><circle cx="1419.22" cy="581.84" r="4.5" fill="rgb(235,30,45)"/><circle cx="1300" cy="517.5" r="12" fill="url(#pin)"/><path d="M1231 517.3 L1300 514.5 L1314 515 Q1317 517.5 1314 520 L1300 520.5 Z" fill="#ec2a3f"/><circle cx="1300" cy="517.5" r="6.5" fill="#ec2a3f"/><circle cx="1300" cy="517.5" r="2.5" fill="#ffffff"/></svg>
<div class="t" style="left:1268.05px;top:444.00px;font-size:39.24px;line-height:39.24px;transform:scaleX(0.8481);font-weight:700;color:#44a0ff;-webkit-text-stroke:0.60px #44a0ff;">Bon</div>
<div class="t" style="left:1279.35px;top:547.00px;font-size:39.83px;line-height:39.83px;transform:scaleX(0.9484);font-weight:700;color:#ffffff;-webkit-text-stroke:0.60px #ffffff;">4</div>
<div class="t" style="left:1306.16px;top:571.00px;font-size:13.92px;line-height:13.92px;transform:scaleX(0.9067);font-weight:700;color:#ffffff;-webkit-text-stroke:0.22px #ffffff;">To</div>
<div class="t" style="left:1285.74px;top:597.00px;font-size:12.83px;line-height:12.83px;transform:scaleX(1.1509);color:#8a8a8a;-webkit-text-stroke:0.45px #8a8a8a;">Écrit</div>
<div class="t" style="left:62.52px;top:705.00px;font-size:19.26px;line-height:19.26px;transform:scaleX(0.9605);font-weight:700;color:#ffffff;-webkit-text-stroke:0.30px #ffffff;">Performance Benchmark</div>
<svg style="position:absolute;left:288px;top:705px" width="14" height="18" viewBox="0 0 14 18"><path d="M3.3 2.6L9.7 9.3L3.3 16" stroke="#fff" stroke-width="1.8" fill="none" stroke-linecap="round" stroke-linejoin="round"/></svg>
<div class="t" style="left:86.79px;top:752.00px;font-size:16.73px;line-height:16.73px;transform:scaleX(0.8941);font-weight:700;color:#ffffff;text-decoration:underline;text-underline-offset:1.5px;text-decoration-thickness:1.1px;text-decoration-color:#d8d8d8;-webkit-text-stroke:0.26px #ffffff;">Configuration du test de...</div>
<svg style="position:absolute;left:0;top:0" width="1580" height="1136" viewBox="0 0 1580 1136"><defs><linearGradient id="ring" x1="0" y1="0" x2="1" y2="0"><stop offset="0" stop-color="#4aa0ff"/><stop offset="1" stop-color="#2038a8"/></linearGradient></defs><circle cx="179.6" cy="878.3" r="88.5" stroke="url(#ring)" stroke-width="6" fill="none"/></svg>
<div class="t" style="left:145.87px;top:825.00px;font-size:31.63px;line-height:31.63px;transform:scaleX(0.9545);font-weight:700;color:#ffffff;-webkit-text-stroke:0.49px #ffffff;">100</div>
<div class="t" style="left:202.70px;top:833.00px;font-size:16.86px;line-height:16.86px;transform:scaleX(0.9140);color:#8a8a8a;">%</div>
<div class="t" style="left:141.23px;top:868.00px;font-size:19.40px;line-height:19.40px;transform:scaleX(0.9856);font-weight:700;color:#a8a8a8;-webkit-text-stroke:0.30px #a8a8a8;">00:00:00</div>
<div style="position:absolute;left:135.0px;top:902.3px;width:89.7px;height:36.7px;background:#2f7ef0;border-radius:4px;"></div>
<div class="t" style="left:146.34px;top:913.00px;font-size:15.01px;line-height:15.01px;transform:scaleX(1.0576);color:#ffffff;-webkit-text-stroke:0.45px #ffffff;">Démarrer</div>
<div class="t" style="left:331.21px;top:752.00px;font-size:17.86px;line-height:17.86px;transform:scaleX(0.9254);font-weight:700;color:#ffffff;-webkit-text-stroke:0.28px #ffffff;">Résultat</div>
<div class="t" style="left:408.20px;top:752.00px;font-size:15.70px;line-height:15.70px;transform:scaleX(0.9653);color:#b0b0b0;">30/5/2025 17:52:51</div>
<div class="t" style="left:331.00px;top:784.00px;font-size:16.57px;line-height:16.57px;transform:scaleX(0.9353);color:#7a7a7a;">(Drive Name:) (378Go)</div>
<div style="position:absolute;left:503.0px;top:788.0px;width:1.0px;height:8.0px;background:#444;"></div>
<div class="t" style="left:519.20px;top:784.00px;font-size:16.57px;line-height:16.57px;transform:scaleX(0.8686);color:#7a7a7a;">1GB</div>
<div style="position:absolute;left:562.0px;top:788.0px;width:1.0px;height:8.0px;background:#444;"></div>
<div class="t" style="left:577.50px;top:784.00px;font-size:16.57px;line-height:16.57px;transform:scaleX(0.9444);color:#7a7a7a;">6 fois</div>
<div style="position:absolute;left:923.0px;top:748.2px;width:85.2px;height:36.5px;box-sizing:border-box;border:1px solid #3e3e3e;border-radius:5px;"></div>
<div class="t" style="left:934.94px;top:761.00px;font-size:15.44px;line-height:15.44px;transform:scaleX(1.0457);color:#ffffff;-webkit-text-stroke:0.45px #ffffff;">Exporter</div>
<div style="position:absolute;left:360.0px;top:850.0px;width:266.3px;height:2.0px;background:#3a3a3a;"></div>
<div style="position:absolute;left:360.0px;top:848.7px;width:44.0px;height:4.8px;background:linear-gradient(90deg,#2e6cf0,#4092fa);border-radius:2.5px;"></div>
<div class="t" style="left:361.34px;top:869.00px;font-size:17.33px;line-height:17.33px;transform:scaleX(1.0237);color:#8e8e8e;-webkit-text-stroke:0.45px #8e8e8e;">Lecture séquentielle</div>
<div class="t" style="left:548.19px;top:866.00px;font-size:24.60px;line-height:24.60px;transform:scaleX(0.9339);font-weight:700;color:#ffffff;-webkit-text-stroke:0.38px #ffffff;">100</div>
<div class="t" style="left:593.90px;top:873.00px;font-size:15.26px;line-height:15.26px;transform:scaleX(0.9736);color:#ffffff;">Mo/s</div>
<div style="position:absolute;left:360.0px;top:908.0px;width:266.3px;height:2.0px;background:#3a3a3a;"></div>
<div style="position:absolute;left:360.0px;top:906.7px;width:44.0px;height:4.8px;background:linear-gradient(90deg,#2e6cf0,#4092fa);border-radius:2.5px;"></div>
<div class="t" style="left:361.34px;top:927.00px;font-size:17.33px;line-height:17.33px;transform:scaleX(1.0317);color:#8e8e8e;-webkit-text-stroke:0.45px #8e8e8e;">Écriture séquentielle</div>
<div class="t" style="left:548.19px;top:924.00px;font-size:24.60px;line-height:24.60px;transform:scaleX(0.9339);font-weight:700;color:#ffffff;-webkit-text-stroke:0.38px #ffffff;">100</div>
<div class="t" style="left:593.90px;top:931.00px;font-size:15.26px;line-height:15.26px;transform:scaleX(0.9736);color:#ffffff;">Mo/s</div>
<div style="position:absolute;left:711.0px;top:850.0px;width:267.2px;height:2.0px;background:#3a3a3a;"></div>
<div style="position:absolute;left:711.0px;top:848.7px;width:16.2px;height:4.8px;background:linear-gradient(90deg,#2e6cf0,#4092fa);border-radius:2.5px;"></div>
<div class="t" style="left:712.24px;top:869.00px;font-size:17.33px;line-height:17.33px;transform:scaleX(1.0179);color:#8e8e8e;-webkit-text-stroke:0.45px #8e8e8e;">Lecture aléatoire</div>
<div class="t" style="left:886.09px;top:866.00px;font-size:24.60px;line-height:24.60px;transform:scaleX(0.9887);font-weight:700;color:#ffffff;-webkit-text-stroke:0.38px #ffffff;">6000</div>
<div class="t" style="left:946.00px;top:873.00px;font-size:15.41px;line-height:15.41px;transform:scaleX(0.8473);color:#ffffff;">IOPS</div>
<div style="position:absolute;left:711.0px;top:908.0px;width:267.2px;height:2.0px;background:#3a3a3a;"></div>
<div style="position:absolute;left:711.0px;top:906.7px;width:16.2px;height:4.8px;background:linear-gradient(90deg,#2e6cf0,#4092fa);border-radius:2.5px;"></div>
<div class="t" style="left:712.24px;top:927.00px;font-size:17.33px;line-height:17.33px;transform:scaleX(1.0245);color:#8e8e8e;-webkit-text-stroke:0.45px #8e8e8e;">Écriture aléatoire</div>
<div class="t" style="left:886.09px;top:924.00px;font-size:24.60px;line-height:24.60px;transform:scaleX(0.9887);font-weight:700;color:#ffffff;-webkit-text-stroke:0.38px #ffffff;">5800</div>
<div class="t" style="left:946.00px;top:931.00px;font-size:15.41px;line-height:15.41px;transform:scaleX(0.8473);color:#ffffff;">IOPS</div>
<div class="t" style="left:1083.33px;top:704.00px;font-size:20.11px;line-height:20.11px;transform:scaleX(0.8889);font-weight:700;color:#ffffff;-webkit-text-stroke:0.31px #ffffff;">Diagnostic Scan</div>
<svg style="position:absolute;left:1234px;top:705px" width="14" height="18" viewBox="0 0 14 18"><path d="M3.3 2.6L9.7 9.3L3.3 16" stroke="#fff" stroke-width="1.8" fill="none" stroke-linecap="round" stroke-linejoin="round"/></svg>
<div style="position:absolute;left:1082.3px;top:749.8px;width:257.3px;height:37.6px;box-sizing:border-box;border:1px solid #3e3e3e;border-radius:5px;"></div>
<div class="t" style="left:1094.30px;top:761.00px;font-size:17.44px;line-height:17.44px;transform:scaleX(0.9118);color:#b4b4b4;">Analyse rapide</div>
<svg style="position:absolute;left:1318px;top:765px" width="12" height="8" viewBox="0 0 12 8"><path d="M1 1H11L6 7Z" fill="#d0d0d0"/></svg>
<div style="position:absolute;left:1426.6px;top:749.8px;width:90.0px;height:37.6px;box-sizing:border-box;border:1px solid #3e3e3e;border-radius:5px;"></div>
<div class="t" style="left:1438.44px;top:763.00px;font-size:15.73px;line-height:15.73px;transform:scaleX(1.0102);color:#ffffff;-webkit-text-stroke:0.45px #ffffff;">Démarrer</div>
<div class="t" style="left:1453.76px;top:804.00px;font-size:30.65px;line-height:30.65px;transform:scaleX(0.9113);font-weight:700;color:#ffffff;-webkit-text-stroke:0.48px #ffffff;">100</div>
<div class="t" style="left:1504.38px;top:817.00px;font-size:15.18px;line-height:15.18px;transform:scaleX(0.9147);font-weight:700;color:#ffffff;-webkit-text-stroke:0.24px #ffffff;">%</div>
<div style="position:absolute;left:1082.3px;top:852.5px;width:418.0px;height:15.5px;background:#343434;border-radius:8px;box-shadow:0 0 1px rgba(0,0,0,0.5);"></div>
<div class="t" style="left:1083.74px;top:889.00px;font-size:14.72px;line-height:14.72px;transform:scaleX(0.9648);color:#a0a0a0;-webkit-text-stroke:0.45px #a0a0a0;">Elapsed Time</div>
<div class="t" style="left:1205.74px;top:889.00px;font-size:14.72px;line-height:14.72px;transform:scaleX(1.0051);color:#a0a0a0;-webkit-text-stroke:0.45px #a0a0a0;">Estimated Time</div>
<div class="t" style="left:1082.93px;top:915.00px;font-size:19.68px;line-height:19.68px;transform:scaleX(0.9702);font-weight:700;color:#ffffff;-webkit-text-stroke:0.31px #ffffff;">00:03:25</div>
<div class="t" style="left:1205.63px;top:915.00px;font-size:19.68px;line-height:19.68px;transform:scaleX(0.9702);font-weight:700;color:#ffffff;-webkit-text-stroke:0.31px #ffffff;">00:03:25</div>
<div class="t" style="left:62.53px;top:1104.00px;font-size:19.68px;line-height:19.68px;transform:scaleX(0.9533);font-weight:700;color:#ffffff;-webkit-text-stroke:0.31px #ffffff;">Volume de lecteur</div>
<svg style="position:absolute;left:235px;top:1103.5px" width="14" height="18" viewBox="0 0 14 18"><path d="M3.3 2.6L9.7 9.3L3.3 16" stroke="#fff" stroke-width="1.8" fill="none" stroke-linecap="round" stroke-linejoin="round"/></svg>
<div class="t" style="left:1083.93px;top:1108.00px;font-size:19.68px;line-height:19.68px;transform:scaleX(0.9504);font-weight:700;color:#ffffff;-webkit-text-stroke:0.31px #ffffff;">Performance Optimization</div>
<svg style="position:absolute;left:1329.5px;top:1106.5px" width="14" height="18" viewBox="0 0 14 18"><path d="M3.3 2.6L9.7 9.3L3.3 16" stroke="#fff" stroke-width="1.8" fill="none" stroke-linecap="round" stroke-linejoin="round"/></svg>
<div style="position:absolute;left:1349.3px;top:1096.8px;width:169.2px;height:43.2px;box-sizing:border-box;border:1px solid #3e3e3e;border-radius:5px;"></div>
<div class="t" style="left:1360.34px;top:1110.00px;font-size:16.17px;line-height:16.17px;transform:scaleX(1.0020);color:#9a9a9a;-webkit-text-stroke:0.45px #9a9a9a;">Application du mode</div>
</div></div></div></body></html>
